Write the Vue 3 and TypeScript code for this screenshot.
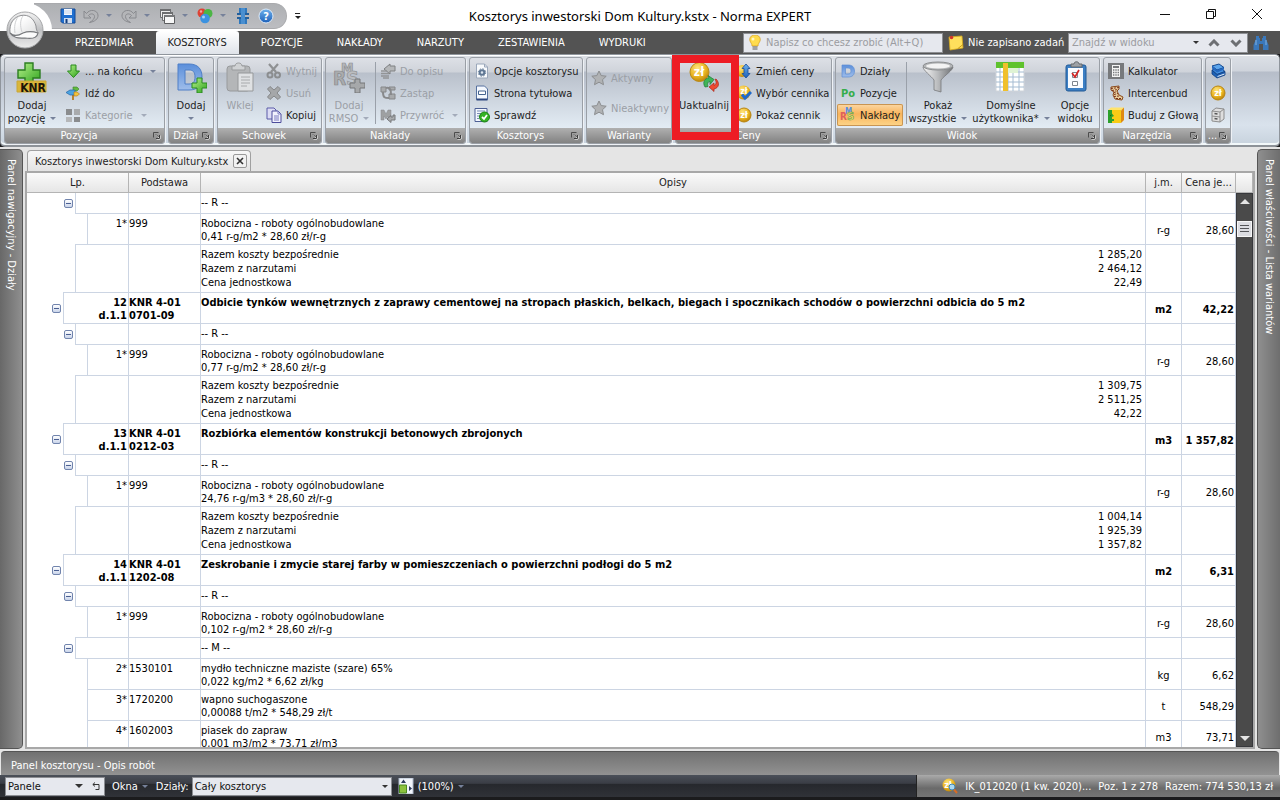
<script setup lang="ts">
import { ref } from 'vue'

interface Command {
  icon: string
  label: string
  off?: boolean
  drop?: boolean
  on?: boolean
}
interface Column {
  kind: 'big' | 'stack' | 'sep'
  width?: number
  inset?: number
  lines?: string[]
  icon?: string
  off?: boolean
  drop?: boolean
  items?: Command[]
}
interface Group {
  name: string
  width: number
  plain?: boolean
  marked?: boolean
  columns: Column[]
}

const tabs = ['PRZEDMIAR', 'KOSZTORYS', 'POZYCJE', 'NAKŁADY', 'NARZUTY', 'ZESTAWIENIA', 'WYDRUKI']
const activeTab = ref('KOSZTORYS')

const groups: Group[] = [
  {
    name: 'Pozycja', width: 161, columns: [
      { kind: 'big', width: 54, icon: 'knr', lines: ['Dodaj', 'pozycję'], drop: true },
      { kind: 'stack', inset: 6, items: [
        { icon: 'down', label: '... na końcu', drop: true },
        { icon: 'goto', label: 'Idź do' },
        { icon: 'tiles', label: 'Kategorie', off: true, drop: true },
      ] },
    ],
  },
  { name: 'Dział', width: 46, columns: [{ kind: 'big', width: 44, icon: 'dplus', lines: ['Dodaj', ''], drop: true }] },
  {
    name: 'Schowek', width: 105, columns: [
      { kind: 'big', width: 44, icon: 'paste', lines: ['Wklej'], off: true },
      { kind: 'stack', inset: 4, items: [
        { icon: 'cut', label: 'Wytnij', off: true },
        { icon: 'cross', label: 'Usuń', off: true },
        { icon: 'copy', label: 'Kopiuj' },
      ] },
    ],
  },
  {
    name: 'Nakłady', width: 141, columns: [
      { kind: 'big', width: 46, icon: 'rms', lines: ['Dodaj', 'RMSO'], off: true, drop: true },
      { kind: 'sep' },
      { kind: 'stack', inset: 4, items: [
        { icon: 'todesc', label: 'Do opisu', off: true },
        { icon: 'swap', label: 'Zastąp', off: true },
        { icon: 'restore', label: 'Przywróć', off: true, drop: true },
      ] },
    ],
  },
  {
    name: 'Kosztorys', width: 114, columns: [
      { kind: 'stack', inset: 4, items: [
        { icon: 'docgear', label: 'Opcje kosztorysu' },
        { icon: 'titlepage', label: 'Strona tytułowa' },
        { icon: 'check', label: 'Sprawdź' },
      ] },
    ],
  },
  {
    name: 'Warianty', width: 86, plain: true, columns: [
      { kind: 'stack', inset: 4, items: [
        { icon: 'star', label: 'Aktywny', off: true },
        { icon: 'star', label: 'Nieaktywny', off: true },
      ] },
    ],
  },
  {
    name: 'Ceny', width: 157, marked: true, columns: [
      { kind: 'big', width: 56, icon: 'update', lines: ['Uaktualnij'] },
      { kind: 'stack', inset: 4, items: [
        { icon: 'coinup', label: 'Zmień ceny' },
        { icon: 'coincheck', label: 'Wybór cennika' },
        { icon: 'coin', label: 'Pokaż cennik' },
      ] },
    ],
  },
  {
    name: 'Widok', width: 265, columns: [
      { kind: 'stack', inset: 4, width: 67, items: [
        { icon: 'dletter', label: 'Działy' },
        { icon: 'po', label: 'Pozycje' },
        { icon: 'rmssmall', label: 'Nakłady', on: true },
      ] },
      { kind: 'sep' },
      { kind: 'big', width: 62, icon: 'funnel', lines: ['Pokaż', 'wszystkie'], drop: true },
      { kind: 'big', width: 84, icon: 'sheet', lines: ['Domyślne', 'użytkownika*'], drop: true },
      { kind: 'big', width: 44, icon: 'clip', lines: ['Opcje', 'widoku'] },
    ],
  },
  {
    name: 'Narzędzia', width: 99, columns: [
      { kind: 'stack', inset: 4, items: [
        { icon: 'calc', label: 'Kalkulator' },
        { icon: 'inter', label: 'Intercenbud' },
        { icon: 'head', label: 'Buduj z Głową' },
      ] },
    ],
  },
  {
    name: '...', width: 26, columns: [
      { kind: 'stack', inset: 4, items: [
        { icon: 'books', label: '' },
        { icon: 'coin', label: '' },
        { icon: 'cabinet', label: '' },
      ] },
    ],
  },
]

type Kind = 'head' | 'line' | 'sum' | 'item'
interface Row {
  kind: Kind
  lp?: string[]
  code?: string[]
  text: string[]
  values?: string[]
  unit?: string
  price?: string
}

const sumLabels = ['Razem koszty bezpośrednie', 'Razem z narzutami', 'Cena jednostkowa']
const labour = (formula: string): Row => ({
  kind: 'line', lp: ['1*'], code: ['999'], text: ['Robocizna - roboty ogólnobudowlane', formula], unit: 'r-g', price: '28,60',
})

const rows: Row[] = [
  { kind: 'head', text: ['-- R --'] },
  labour('0,41 r-g/m2 * 28,60 zł/r-g'),
  { kind: 'sum', text: sumLabels, values: ['1 285,20', '2 464,12', '22,49'] },
  { kind: 'item', lp: ['12', 'd.1.1'], code: ['KNR 4-01', '0701-09'], text: ['Odbicie tynków wewnętrznych z zaprawy cementowej na stropach płaskich, belkach, biegach i spocznikach schodów o powierzchni odbicia do 5 m2'], unit: 'm2', price: '42,22' },
  { kind: 'head', text: ['-- R --'] },
  labour('0,77 r-g/m2 * 28,60 zł/r-g'),
  { kind: 'sum', text: sumLabels, values: ['1 309,75', '2 511,25', '42,22'] },
  { kind: 'item', lp: ['13', 'd.1.1'], code: ['KNR 4-01', '0212-03'], text: ['Rozbiórka elementów konstrukcji betonowych zbrojonych'], unit: 'm3', price: '1 357,82' },
  { kind: 'head', text: ['-- R --'] },
  labour('24,76 r-g/m3 * 28,60 zł/r-g'),
  { kind: 'sum', text: sumLabels, values: ['1 004,14', '1 925,39', '1 357,82'] },
  { kind: 'item', lp: ['14', 'd.1.1'], code: ['KNR 4-01', '1202-08'], text: ['Zeskrobanie i zmycie starej farby w pomieszczeniach o powierzchni podłogi do 5 m2'], unit: 'm2', price: '6,31' },
  { kind: 'head', text: ['-- R --'] },
  labour('0,102 r-g/m2 * 28,60 zł/r-g'),
  { kind: 'head', text: ['-- M --'] },
  { kind: 'line', lp: ['2*'], code: ['1530101'], text: ['mydło techniczne maziste (szare) 65%', '0,022 kg/m2 * 6,62 zł/kg'], unit: 'kg', price: '6,62' },
  { kind: 'line', lp: ['3*'], code: ['1720200'], text: ['wapno suchogaszone', '0,00088 t/m2 * 548,29 zł/t'], unit: 't', price: '548,29' },
  { kind: 'line', lp: ['4*'], code: ['1602003'], text: ['piasek do zapraw', '0,001 m3/m2 * 73,71 zł/m3'], unit: 'm3', price: '73,71' },
]

const depth: Record<Kind, number> = { item: 0, head: 1, sum: 1, line: 2 }
const closesLevel = (i: number): boolean => i + 1 < rows.length && depth[rows[i + 1].kind] < depth[rows[i].kind]
const indentOf = (i: number): number => 36 + 12 * (depth[rows[i].kind] - (closesLevel(i) ? 1 : 0))
const px = (n?: number) => (n === undefined ? undefined : n + 'px')
</script>

<template>
  <div class="app">
    <svg class="defs" aria-hidden="true">
      <defs>
        <linearGradient id="gGreen" x1="0" y1="0" x2="1" y2="1"><stop offset="0" stop-color="#b6f08a" /><stop offset="1" stop-color="#2ea31d" /></linearGradient>
        <linearGradient id="gBlue" x1="0" y1="0" x2="0" y2="1"><stop offset="0" stop-color="#6fb2ee" /><stop offset="1" stop-color="#1c5fb8" /></linearGradient>
        <linearGradient id="gD" x1="0" y1="0" x2="0" y2="1"><stop offset="0" stop-color="#5b8fdb" /><stop offset="1" stop-color="#9fbdea" /></linearGradient>
        <linearGradient id="gSteel" x1="0" y1="0" x2="1" y2="0"><stop offset="0" stop-color="#f5f5f5" /><stop offset=".5" stop-color="#b9bbbd" /><stop offset="1" stop-color="#6f7174" /></linearGradient>
        <radialGradient id="gCoin" cx=".4" cy=".3" r=".75"><stop offset="0" stop-color="#ffe680" /><stop offset=".6" stop-color="#e9b320" /><stop offset="1" stop-color="#b67d08" /></radialGradient>
        <linearGradient id="gOrb" x1="0" y1="0" x2="0" y2="1"><stop offset="0" stop-color="#f4f4f4" /><stop offset=".5" stop-color="#bfc0c2" /><stop offset="1" stop-color="#ececec" /></linearGradient>
        <linearGradient id="gHat" x1="0" y1="0" x2="1" y2="1"><stop offset=".3" stop-color="#fff" /><stop offset="1" stop-color="#d9dadb" /></linearGradient>
      </defs>
    </svg>
    <svg class="symbols" aria-hidden="true">
      <symbol id="i-knr" viewBox="0 0 32 32">
        <path d="M9 2h8v7h7v8h-7v6H9v-6H2V9h7z" fill="url(#gGreen)" stroke="#2b7d20" stroke-width="1.4" />
        <path d="M1 20h29v11H1z" fill="#d9b63a" stroke="#c9a637" />
        <text x="17" y="31" text-anchor="middle" font-size="12" font-weight="bold" fill="#1c1408">KNR</text>
      </symbol>
      <symbol id="i-down" viewBox="0 0 16 16"><path d="M6 2h5v6h3.500L8.500 14.500 2.500 8H6z" fill="url(#gGreen)" stroke="#278a1c" stroke-width="1" /></symbol>
      <symbol id="i-goto" viewBox="0 0 16 16">
        <path d="M7 5h2v10H7z" fill="#b98330" />
        <path d="M8 2h4l2 2-2 2H8z" fill="#63ba3f" stroke="#3a852a" stroke-width=".6" /><path d="M10 5H5L1 7.500 5 10h5z" fill="#4aa3e0" stroke="#2665a8" stroke-width=".7" /><path d="M9 7h3l2.500 2L12 11H9z" fill="#f3c23c" stroke="#b07a1c" stroke-width=".6" />
      </symbol>
      <symbol id="i-tiles" viewBox="0 0 16 16"><path d="M1 2h6v6H1z" fill="#8a8c8e" /><path d="M9 2h6v6H9z" fill="#a9abad" /><path d="M1 10h6v5H1z" fill="#b5b7b9" /><path d="M9 10h6v5H9z" fill="#8a8c8e" /></symbol>
      <symbol id="i-dplus" viewBox="0 0 32 32">
        <path fill-rule="evenodd" d="M3 3h11c9 0 13 5 13 13S23 29 14 29H3zM10 9v14h4c4 0 6-2 6-7s-2-7-6-7z" fill="url(#gD)" stroke="#4f7fc7" />
        <path d="M22 17h5v5h5v5h-5v5h-5v-5h-5v-5h5z" fill="url(#gGreen)" stroke="#2b8a20" />
      </symbol>
      <symbol id="i-paste" viewBox="0 0 32 32">
        <rect x="3" y="5" width="23" height="25" rx="3" fill="#b4b6b8" stroke="#989a9c" /><path d="M8 9V5h3c0-4 7-4 7 0h3v4z" fill="#d0d2d4" stroke="#999b9d" />
        <path d="M14 12h15v18H14z" fill="#dfe1e3" stroke="#96989a" /><path d="M17 16h9M17 19h9M17 22h9M17 25h6" stroke="#a8aaac" />
      </symbol>
      <symbol id="i-cut" viewBox="0 0 16 16"><path d="M3 1l7 8M12 1L5 9" stroke="#8f9193" stroke-width="2.200" /><circle cx="4" cy="12" r="2.500" fill="none" stroke="#8b8d8f" stroke-width="2" /><circle cx="11.500" cy="12" r="2.500" fill="none" stroke="#8b8d8f" stroke-width="2" /></symbol>
      <symbol id="i-cross" viewBox="0 0 16 16"><path d="M4 1.500L8 5l4-3.500L14.500 4 11 8l3.500 4L12 14.500 8 11l-4 3.500L1.500 12 5 8 1.500 4z" fill="#a5a7a9" stroke="#858789" /></symbol>
      <symbol id="i-copy" viewBox="0 0 16 16"><path d="M1 1h7l2 2v9H1z" fill="#dcdcf4" stroke="#5b5ba8" /><path d="M6 4h6l3 3v8.500H6z" fill="#f1f1fc" stroke="#4d4d9c" /><path d="M12 4v3h3M8 9h5M8 11h5M8 13h5" fill="none" stroke="#7b7bc0" /></symbol>
      <symbol id="i-rms" viewBox="0 0 32 32">
        <text x="8" y="12" font-size="14" font-weight="bold" fill="#b5b7ba" stroke="#8f9194" stroke-width=".7">M</text><text x="0" y="24" font-size="19" font-weight="bold" fill="#aaacae" stroke="#88898b" stroke-width=".7">R</text><text x="13" y="24" font-size="20" font-weight="bold" fill="#bbbdc0" stroke="#929496" stroke-width=".7">S</text>
        <path d="M22 18h5v4h5v5h-5v5h-5v-5h-5v-5h5z" fill="#a6a8aa" stroke="#747678" />
      </symbol>
      <symbol id="i-todesc" viewBox="0 0 16 16"><path d="M15 3v5h-5v3L4 6l6-5v2z" fill="#b5b7b9" stroke="#7e8082" /><path d="M1 8h6M1 10.500h8M1 13h8M3 15h6" stroke="#929496" stroke-width="1.500" /></symbol>
      <symbol id="i-swap" viewBox="0 0 16 16"><path d="M1 2h5v5H1zM9 2h6v3H9zM9 9h6v5H9z" fill="#a8aaac" stroke="#858789" /><path d="M3 7c0 6 2 6 6 6M6 3c5-1 5 3 5 7" fill="none" stroke="#88898b" stroke-width="2" /></symbol>
      <symbol id="i-restore" viewBox="0 0 16 16"><path d="M1 13V3h3l2 4 2-4h3v10H8V9l-2 3-2-3v4z" fill="#9ea0a2" stroke="#858789" stroke-width=".5" /><path d="M15 8v5h-4v2.500L7 12l4-3.500V10h2V8z" fill="#a9abad" stroke="#77797b" /></symbol>
      <symbol id="i-docgear" viewBox="0 0 16 16"><path d="M2.500 1h8l3 3v11h-11z" fill="#f8fafc" stroke="#9aa7ba" /><path d="M10.500 1v3h3" fill="none" stroke="#9aa7ba" /><circle cx="8" cy="9.500" r="2.300" fill="#dfe7f0" stroke="#5f7794" stroke-width="2" /><circle cx="8" cy="9.500" r="3.700" fill="none" stroke="#5f7794" stroke-dasharray="1.500 1.400" /></symbol>
      <symbol id="i-titlepage" viewBox="0 0 16 16"><path d="M2.500 1h8l3 3v10.500h-11z" fill="#f4f8fe" stroke="#56719f" /><path d="M2.500 14.500h11" stroke="#2d477f" stroke-width="2" /><path d="M4.500 6h7v3.500h-7z" fill="#fff" stroke="#46648f" /></symbol>
      <symbol id="i-check" viewBox="0 0 16 16"><path d="M1 1.500h12v13H1z" fill="#f4f8fe" stroke="#4c5f94" /><path d="M3 4h8M3 6.500h6M3 9h3M3 11.500h2" stroke="#778bb3" /><circle cx="10.500" cy="10" r="5" fill="#35b225" stroke="#1c8613" /><path d="M8 10l2 2 3-4" fill="none" stroke="#fff" stroke-width="1.800" /></symbol>
      <symbol id="i-star" viewBox="0 0 16 16"><path d="M8 1l2.200 4.600 5 .6-3.700 3.500 1 5L8 12.200 3.500 14.700l1-5L.8 6.200l5-.6z" fill="#b0b2b4" stroke="#8c8e90" /></symbol>
      <symbol id="i-coin" viewBox="0 0 16 16"><circle cx="8" cy="8" r="7" fill="url(#gCoin)" stroke="#b88512" /><text x="8" y="11" text-anchor="middle" font-size="9" font-weight="bold" fill="#fff">zł</text></symbol>
      <symbol id="i-coinup" viewBox="0 0 16 16"><circle cx="6" cy="8" r="6" fill="url(#gCoin)" /><path d="M10 1l4 4.500h-2v5h2L10 15l-4-4.500h2v-5H6z" fill="url(#gBlue)" stroke="#164d9c" stroke-width=".8" /></symbol>
      <symbol id="i-coincheck" viewBox="0 0 16 16"><circle cx="7.500" cy="7.500" r="7" fill="url(#gCoin)" /><text x="8" y="9" text-anchor="middle" font-size="8" font-weight="bold" fill="#fff">zł</text><path d="M6 9.500l3 3.500 6-6" fill="none" stroke="#1e69cc" stroke-width="3" /></symbol>
      <symbol id="i-update" viewBox="0 0 32 32">
        <circle cx="11.500" cy="11" r="9.500" fill="url(#gCoin)" stroke="#b98a18" /><text x="11" y="15" text-anchor="middle" font-size="12" font-weight="bold" fill="#fff">zł</text>
        <path d="M17 26c-3-5 0-9 4-9l-1-2.500 6 4-4 5v-3c-2 0-3 2-2 5z" fill="#3fb457" stroke="#1c7a35" stroke-width=".7" /><path d="M28 18c4 4 3 9-2 10v2.500l-5-4.500 5-4v2.500c2-1 3-3 1-6z" fill="#ee4a31" stroke="#a92316" stroke-width=".7" />
      </symbol>
      <symbol id="i-dletter" viewBox="0 0 16 16"><path fill-rule="evenodd" d="M2 2h6c4.500 0 6.500 2.200 6.500 6S12.500 14 8 14H2zM5.500 5v6H8c2 0 3-1 3-3s-1-3-3-3z" fill="url(#gD)" stroke="#5f8ed2" stroke-width=".7" /></symbol>
      <symbol id="i-po" viewBox="0 0 16 16"><text x="8" y="12" text-anchor="middle" font-size="11" font-weight="bold" fill="#35ad4a">Po</text></symbol>
      <symbol id="i-rmssmall" viewBox="0 0 16 16"><text x="5" y="7" font-size="8" font-weight="bold" fill="#5b8fe0">M</text><text x="0" y="13" font-size="10" font-weight="bold" fill="#e0605a">R</text><text x="7" y="13" font-size="11" font-weight="bold" fill="#f6dc6a" stroke="#5ba04a" stroke-width=".6">S</text></symbol>
      <symbol id="i-funnel" viewBox="0 0 32 32"><path d="M1 6c0 3 8 9 11 13v10l7 2V19c3-4 12-10 12-13z" fill="url(#gSteel)" stroke="#77797b" stroke-width=".8" /><ellipse cx="16" cy="5" rx="15" ry="4" fill="#b3b5b7" stroke="#8a8c8e" /><ellipse cx="16" cy="5" rx="12" ry="2.600" fill="#f3f3f3" /></symbol>
      <symbol id="i-sheet" viewBox="0 0 32 32">
        <path d="M1 1h28v29H1z" fill="#fff" stroke="#cfd4da" /><path d="M1 1h28v6H1z" fill="#5fc22d" />
        <path d="M1 11h28M1 16h28M1 21h28M1 26h28M5 7v23M13 7v23M18 7v23M24 7v23" stroke="#a5bcd2" /><path d="M13 7h10v5H13z" fill="#dff3d4" /><path d="M8 2h5v28H8z" fill="#f0c02c" />
      </symbol>
      <symbol id="i-clip" viewBox="0 0 32 32"><rect x="7" y="4" width="20" height="26" rx="2" fill="#3c7fc4" stroke="#235a96" /><path d="M9 7h15v20H9z" fill="#f8fbff" /><path d="M12 6V3h3c0-3 5-3 5 0h3v3z" fill="#9da1a6" stroke="#64686d" /><path d="M13.500 11.500h5v5h-5zM13.500 20.500h5v4h-5z" fill="#fff" stroke="#7d858f" /><path d="M13 12l3 4 4-7" fill="none" stroke="#d52626" stroke-width="1.700" /></symbol>
      <symbol id="i-calc" viewBox="0 0 16 16"><path d="M0 0h16v16H0z" fill="#77797c" /><path d="M4 2h8v12H4z" fill="#f4f4f4" /><path d="M5 3h6v2H5z" fill="#77797c" /><path d="M5 7h6M5 9.500h6M5 12h6" stroke="#77797c" stroke-width="1.500" stroke-dasharray="1.400 .9" /></symbol>
      <symbol id="i-inter" viewBox="0 0 16 16"><path d="M3 2l8-1v3L9 6l2 4 4 2-1 3-7-1-2-4 1-3-3-2z" fill="#e8cf9c" stroke="#8a4a1c" /><path d="M3 3.500l8-1M4 5.500l6-1M6 7.500l3-1M6 9.500l4-1M6 11.500l5-.5M8 13.500l6 0" stroke="#7b2f1b" stroke-width="1" stroke-dasharray="2 1" /></symbol>
      <symbol id="i-head" viewBox="0 0 16 16"><path d="M0 3l3-2.500h13l-3 3z" fill="#ffe36a" /><path d="M0 3h13v13H0z" fill="#f8cb16" /><path d="M13 3.500l3-3V13l-3 3z" fill="#df8a12" /><path d="M0 3h4v3.500L6 9l-2 1v2h2v2H4v2H0z" fill="#2ca02c" /><path d="M2 9l1.500-1" stroke="#175b17" /></symbol>
      <symbol id="i-books" viewBox="0 0 16 16"><path d="M2 7l8-2.500 5 4L7 11.500z" fill="#4791de" stroke="#164a91" /><path d="M2 7v4l5 4 8-3V8.500L7 11.500z" fill="#1d61b6" stroke="#123f80" stroke-width=".8" /><path d="M2 3l7-2 5 3.500-7 2.500z" fill="#5ca5ec" stroke="#164a91" /><path d="M7 7l7-2.500v2L7 9.500 2 5.500V3z" fill="#2468c0" /><path d="M7.500 13.500l7-2.500" stroke="#e8eef6" /></symbol>
      <symbol id="i-cabinet" viewBox="0 0 16 16"><path d="M2 4l4-3 8 1v10l-4 3-8-1z" fill="#dedede" stroke="#8d8d8d" /><path d="M2 4l8 1v10M10 5l4-3M2 9l8 1" fill="none" stroke="#8d8d8d" /><path d="M4.500 6.500l3 .4M4.500 11.500l3 .4" stroke="#555" stroke-width="1.500" /></symbol>
      <symbol id="i-save" viewBox="0 0 16 16"><path d="M1 1h14v14H2.500L1 13.500z" fill="#1f6fd0" stroke="#154a96" /><path d="M4 1h8v6H4z" fill="#f4f8ff" /><path d="M4 3h8M4 5h8" stroke="#b8c8de" stroke-width=".8" /><path d="M4 10h8v5H4z" fill="#cfdcee" /><path d="M5.500 11h2v4h-2z" fill="#123d7c" /></symbol>
      <symbol id="i-undo" viewBox="0 0 16 16"><path d="M1 3v7h7L5.500 7.500c2-2.500 6-2 6 1 0 2-1.500 4-5 6 5-.8 9-3.500 8.500-7.500C14.500 2 7 .5 3.500 5.500z" fill="#b4b5b8" stroke="#85868a" stroke-width=".9" /></symbol>
      <symbol id="i-windows" viewBox="0 0 16 16"><path d="M1.500 1.500h10v8h-10z" fill="#eee" stroke="#6d6e70" /><path d="M1 1h11v2H1z" fill="#6d6e70" /><path d="M3.500 4.500h10v8h-10z" fill="#eee" stroke="#6d6e70" /><path d="M3 4h11v2H3z" fill="#6d6e70" /><path d="M5.500 7.500h10v8h-10z" fill="#f7f7f7" stroke="#5b5c5e" /><path d="M5 7h11v2H5z" fill="#77787a" /></symbol>
      <symbol id="i-balls" viewBox="0 0 16 16"><circle cx="5" cy="5" r="4.500" fill="#dd4234" /><circle cx="11" cy="5.500" r="4.500" fill="#4bb545" /><circle cx="8" cy="10.500" r="4.800" fill="#3b92e0" /><circle cx="6.500" cy="9" r="1.500" fill="#a6d3f7" /><circle cx="4" cy="3.500" r="1.200" fill="#f3a69c" /></symbol>
      <symbol id="i-fit" viewBox="0 0 16 16"><path d="M4 0h3v5H4zM9 0h3v5H9zM4 11h3v5H4zM9 11h3v5H9z" fill="#2f78bd" /><path d="M2 6h12M2 10h12" stroke="#235f9c" stroke-width="2" /><path d="M6 0h4v16H6z" fill="#4a8fd0" /></symbol>
      <symbol id="i-help" viewBox="0 0 16 16"><circle cx="8" cy="8" r="7" fill="url(#gBlue)" stroke="#dfeaf6" /><text x="8" y="12" text-anchor="middle" font-size="11" font-weight="bold" fill="#fff">?</text></symbol>
      <symbol id="i-bulb" viewBox="0 0 16 16"><path d="M8 0c4 0 6 3 5 6-.7 2-2 2.500-2 5H5c0-2.500-1.300-3-2-5C2 3 4 0 8 0z" fill="#ffdc4d" stroke="#d59b18" stroke-width=".7" /><circle cx="6" cy="4" r="1.500" fill="#fff7c8" /><path d="M5.500 12h5M5.500 14h5" stroke="#8a8a8a" stroke-width="1.700" /></symbol>
      <symbol id="i-note" viewBox="0 0 16 16"><path d="M1 2l13-1 1 12-13 2z" fill="#ffe05c" stroke="#d6a91d" stroke-width=".8" /><path d="M10 13.500l5-4" stroke="#c99c18" /><circle cx="3.500" cy="2.500" r="1.800" fill="#d2352a" /></symbol>
      <symbol id="i-binoc" viewBox="0 0 16 16"><path d="M3 1h3v2h1v3h2V3h1V1h3v3l2.500 6v5H10V9H6v6H.5v-5L3 4z" fill="#3a78bb" /><path d="M3 5v5M13 5v5" stroke="#82b1e0" /></symbol>
      <symbol id="i-launch" viewBox="0 0 8 8"><path d="M.5 5.500v-5h5" fill="none" stroke="#4d4d4d" /><path d="M3 3l3.500 3.500M7 3.500V7H3.500" fill="none" stroke="#fff" /><path d="M3 2.500l3 3M6.500 3v3.500H3" fill="none" stroke="#3d3d3d" /></symbol>
      <symbol id="i-orb" viewBox="0 0 38 38"><circle cx="19" cy="19" r="18" fill="url(#gOrb)" stroke="#a5a6a8" /><path d="M4 22C3 12 8 6 15 4.500 23 3 28 8 30 15c0 3 1 5 2 7-5 1-9-1-14 0-5 3-9 5-14 0z" fill="url(#gHat)" stroke="#909194" /><path d="M12 6c-3 4-4 10-3 16M17 5c-3 4-3 10-1 16" fill="none" stroke="#d0d1d3" /><path d="M4 22c4 4 8 3 13 0 5-2 12-1 15 0-1 5-7 6-13 5-5 0-11 1-15-5z" fill="#fbfbfb" stroke="#77797c" stroke-width="1.200" /></symbol>
      <symbol id="i-coinfind" viewBox="0 0 16 16"><circle cx="7" cy="7" r="6.500" fill="url(#gCoin)" /><text x="6" y="10" text-anchor="middle" font-size="9" font-weight="bold" fill="#fff">zł</text><circle cx="10" cy="9" r="3" fill="#a9d8f2" stroke="#3e85b5" /><path d="M12 11.500l3 3.500" stroke="#d86c24" stroke-width="2" /></symbol>
      <symbol id="i-zoom" viewBox="0 0 16 16"><path d="M1 0h14v16H1z" fill="#f1f5fb" stroke="#aeb9cb" /><path d="M1.500 7h7v8h-7z" fill="#8bc13e" stroke="#4b8a1e" /><path d="M3 5h5L5.500 1.500zM11 8v5l3-2.500z" fill="#2b3a5c" /></symbol>
    </svg>

    <header class="titlebar">
      <button class="orb" aria-label="Menu programu"><svg><use href="#i-orb" /></svg></button>
      <div class="lead">
        <div class="quick">
          <button class="q" aria-label="Zapisz"><svg><use href="#i-save" /></svg></button>
          <button class="q wide" aria-label="Cofnij"><svg><use href="#i-undo" /></svg><i class="drop"></i></button>
          <button class="q wide" aria-label="Ponów"><svg class="flip"><use href="#i-undo" /></svg><i class="drop"></i></button>
          <button class="q wide" aria-label="Okna"><svg><use href="#i-windows" /></svg><i class="drop"></i></button>
          <button class="q wide" aria-label="Kolory"><svg><use href="#i-balls" /></svg><i class="drop"></i></button>
          <button class="q" aria-label="Dopasuj"><svg><use href="#i-fit" /></svg></button>
          <button class="q" aria-label="Pomoc"><svg><use href="#i-help" /></svg></button>
        </div>
        <button class="more" aria-label="Dostosuj pasek"></button>
      </div>
      <h1>Kosztorys inwestorski Dom Kultury.kstx - Norma EXPERT</h1>
      <div class="winbtns">
        <button aria-label="Minimalizuj"><svg viewBox="0 0 12 12"><path d="M1 6.500h10" /></svg></button>
        <button aria-label="Przywróć"><svg viewBox="0 0 12 12"><path d="M1.500 3.500h7v7h-7zM3.500 3V1.500h7v7H9" /></svg></button>
        <button aria-label="Zamknij"><svg viewBox="0 0 12 12"><path d="M1 1l10 10M11 1L1 11" /></svg></button>
      </div>
    </header>

    <nav class="tabrow">
      <button v-for="t in tabs" :key="t" class="tab" :class="{ active: t === activeTab }" @click="activeTab = t">{{ t }}</button>
      <div class="tools">
        <label class="tell"><svg><use href="#i-bulb" /></svg><input type="text" placeholder="Napisz co chcesz zrobić (Alt+Q)" aria-label="Napisz co chcesz zrobić" /></label>
        <button class="tasks"><svg><use href="#i-note" /></svg>Nie zapisano zadań</button>
        <div class="find">
          <input type="text" placeholder="Znajdź w widoku" aria-label="Znajdź w widoku" />
          <button aria-label="Historia"><i class="drop dark"></i></button>
          <button aria-label="Poprzedni"><svg viewBox="0 0 12 8"><path d="M1.500 6.500L6 2l4.500 4.500" /></svg></button>
          <button aria-label="Następny"><svg viewBox="0 0 12 8"><path d="M1.500 1.500L6 6l4.500-4.500" /></svg></button>
        </div>
        <button class="binoc" aria-label="Szukaj"><svg><use href="#i-binoc" /></svg></button>
      </div>
    </nav>

    <section class="ribbon">
      <div v-for="g in groups" :key="g.name" class="group" :style="{ width: px(g.width) }">
        <div class="gbody">
          <template v-for="(c, ci) in g.columns" :key="ci">
            <button v-if="c.kind === 'big'" class="big" :class="{ off: c.off }" :style="{ width: px(c.width) }">
              <svg><use :href="'#i-' + c.icon" /></svg>
              <span v-for="(l, li) in c.lines" :key="li">{{ l }}<i v-if="c.drop && li === 1" class="drop"></i></span>
            </button>
            <span v-else-if="c.kind === 'sep'" class="sep"></span>
            <div v-else class="stack" :style="{ width: px(c.width), paddingLeft: px((c.inset ?? 4) - 3) }">
              <button v-for="b in c.items" :key="b.icon + b.label" class="small" :class="{ off: b.off, on: b.on }" :aria-label="b.label || b.icon">
                <svg><use :href="'#i-' + b.icon" /></svg><span v-if="b.label">{{ b.label }}</span><i v-if="b.drop" class="drop"></i>
              </button>
            </div>
          </template>
        </div>
        <div class="gfoot"><span>{{ g.name }}</span><svg v-if="!g.plain"><use href="#i-launch" /></svg></div>
        <div v-if="g.marked" class="marker"></div>
      </div>
    </section>

    <main class="work">
      <aside class="side left"><span>Panel nawigacyjny - Działy</span></aside>
      <div class="doc">
        <div class="doctabs">
          <div class="doctab"><span>Kosztorys inwestorski Dom Kultury.kstx</span><button aria-label="Zamknij kartę"><svg viewBox="0 0 8 8"><path d="M1 1l6 6M7 1L1 7" /></svg></button></div>
        </div>
        <div class="sheet">
          <table>
            <thead>
              <tr><th>Lp.</th><th>Podstawa</th><th>Opisy</th><th>j.m.</th><th>Cena je...</th><th aria-label="Przewijanie"></th></tr>
            </thead>
            <tbody>
              <tr v-for="(r, i) in rows" :key="i" :class="r.kind">
                <td class="lp">
                  <span class="indent" :style="{ width: px(indentOf(i)) }"><button v-if="r.kind === 'item' || r.kind === 'head'" aria-label="Zwiń"></button></span>
                  <span v-if="closesLevel(i)" class="filler"></span>
                  <span class="num"><span v-for="l in r.lp" :key="l">{{ l }}</span></span>
                </td>
                <td class="code"><span v-for="l in r.code" :key="l">{{ l }}</span></td>
                <td class="desc">
                  <div v-for="(l, li) in r.text" :key="li"><span>{{ l }}</span><span v-if="r.values">{{ r.values[li] }}</span></div>
                </td>
                <td class="unit">{{ r.unit }}</td>
                <td class="price">{{ r.price }}</td>
              </tr>
            </tbody>
          </table>
          <div class="scroll"><i class="up"></i><div class="thumb"></div><i class="down"></i></div>
        </div>
      </div>
      <aside class="side right"><span>Panel właściwości - Lista wariantów</span></aside>
    </main>

    <div class="dock"><section class="bottom">Panel kosztorysu - Opis robót</section></div>

    <footer class="status">
      <div class="panels">
        <select aria-label="Panele"><option>Panele</option></select><i class="drop dark"></i>
        <button aria-label="Cofnij układ"><svg viewBox="0 0 8 8"><path d="M3 .5L.8 2.500 3 4.500M1 2.500h6v5H3.500" /></svg></button>
      </div>
      <button class="link">Okna<i class="drop"></i></button>
      <label for="dz">Działy:</label>
      <div class="scope"><select id="dz"><option>Cały kosztorys</option></select><i class="drop dark"></i></div>
      <button class="zoom" aria-label="Powiększenie"><svg><use href="#i-zoom" /></svg>(100%)<i class="drop"></i></button>
      <div class="info"><svg><use href="#i-coinfind" /></svg><span>IK_012020 (1 kw. 2020)...</span><span>Poz. 1 z 278</span><span>Razem: 774 530,13 zł</span></div>
    </footer>
  </div>
</template>

<style>
body { margin: 0; background: #1b1b1d; }
</style>

<style scoped>
.app { height: 100vh; display: flex; flex-direction: column; overflow: hidden; box-sizing: border-box; padding-bottom: 3px; background: #1b1b1d; font: 11px/13px "DejaVu Sans Condensed", "DejaVu Sans", sans-serif; color: #1e1e1e; }
.app * { box-sizing: border-box; }
button, input, select { font: inherit; color: inherit; border: 0; padding: 0; margin: 0; background: none; outline: 0; appearance: none; white-space: nowrap; }
svg { width: 16px; height: 16px; flex: none; display: block; }
.defs { position: absolute; width: 0; height: 0; }
.symbols { display: none; }
.drop { width: 0; height: 0; flex: none; display: inline-block; border: 3px solid transparent; border-top-color: #76819a; border-bottom: 0; }
.drop.dark { border-top-color: #333; }

.titlebar { flex: none; height: 31px; background: #fff; display: grid; grid-template-columns: minmax(0, 1fr) auto minmax(0, 1fr); align-items: center; position: relative; }
.orb { position: absolute; left: 6px; top: 11px; z-index: 3; }
.orb svg { width: 38px; height: 38px; }
.titlebar::before { content: ""; position: absolute; left: -2px; top: 3px; width: 54px; height: 28px; border-radius: 27px 27px 0 0; background: #fff; z-index: 1; }
.lead { display: flex; align-items: center; }
.quick { margin-left: 34px; width: 253px; height: 26px; padding-left: 26px; border-radius: 0 13px 13px 0; background: linear-gradient(#aeb0b3, #bcbdc1); border: 1px solid #a9aaad; border-left: 0; display: flex; align-items: center; gap: 7px; }
.q { display: flex; align-items: center; gap: 7px; }
.q svg { width: 16px; height: 16px; }
.q.wide { width: 31px; }
.flip { transform: scaleX(-1); }
.more { width: 5px; height: 6px; margin-left: 8px; border-top: 1px solid #222; display: flex; align-items: flex-end; }
.more::after { content: ""; border: 3px solid transparent; border-top-color: #222; border-bottom: 0; }
h1 { margin: 0; text-align: center; font: 13px/18px "Noto Sans", sans-serif; color: #000; }
.winbtns { display: flex; width: 138px; margin-left: auto; align-self: start; }
.winbtns button { width: 46px; height: 28px; display: grid; place-items: center; }
.winbtns svg { width: 12px; height: 12px; fill: none; stroke: #111; }

.tabrow { flex: none; height: 23px; background: #535353; display: flex; padding-left: 63px; gap: 10px; }
.tab { padding: 0 12px; color: #fff; height: 23px; }
.tab.active { background: linear-gradient(#fff, #dfe3e9); color: #222; border-radius: 3px 3px 0 0; }
.tools { margin-left: auto; display: flex; align-items: center; gap: 5px; padding-right: 11px; }
.tell { width: 200px; height: 20px; background: #e6e8ee; border: 1px solid #8d8f93; display: flex; align-items: center; gap: 3px; padding-left: 3px; }
.tell input { flex: 1; min-width: 0; }
input::placeholder { color: #9b9ca1; opacity: 1; }
.tasks { display: flex; align-items: center; gap: 4px; color: #fff; width: 115px; }
.find { width: 180px; height: 20px; background: #e6e8ee; border: 1px solid #8d8f93; display: flex; align-items: center; }
.find input { flex: 1; min-width: 0; padding-left: 3px; }
.find button { width: 22px; display: grid; place-items: center; }
.find svg { width: 12px; height: 8px; fill: none; stroke: #6d6f73; stroke-width: 3; }
.find button:nth-of-type(1) { width: 14px; }

.ribbon { flex: none; height: 93px; background: linear-gradient(#dde1e7 0, #cfd4dc 16px, #b6bdc9 17px, #d9e2ec 70px, #c7d2dd 100%); border: 1px solid #8f959c; border-bottom: 2px solid #8d9298; box-shadow: inset 0 1px #fff, inset 0 -2px #f2f8fa; border-radius: 5px; display: flex; gap: 3px; padding: 2px 3px; }
.group { flex: none; height: 87px; border: 1px solid #9a9fa6; border-radius: 3px; box-shadow: 1px 1px #eef1f5; position: relative; display: flex; flex-direction: column; background: linear-gradient(#dde0e6 0, #cfd3da 14px, #b9c0cb 15px, #e3ecf4 70px); }
.gbody { height: 70px; display: flex; overflow: hidden; }
.gfoot { height: 15px; background: linear-gradient(#b0b0b0, #828282); color: #fff; text-align: center; display: flex; align-items: center; border-radius: 0 0 2px 2px; }
.gfoot span { flex: 1; }
.gfoot svg { width: 8px; height: 8px; margin-right: 3px; }
.big { flex: none; display: flex; flex-direction: column; align-items: center; padding-top: 3px; }
.big svg { width: 32px; height: 32px; margin-bottom: 6px; }
.big span { display: flex; align-items: center; gap: 5px; height: 13px; }
.off { color: #9b9fa6; }
.off .drop { border-top-color: #a3abba; }
.sep { flex: none; width: 1px; margin: 4px 0 4px 3px; background: #9aa0a9; }
.stack { flex: none; display: flex; flex-direction: column; justify-content: center; }
.small { height: 22px; display: flex; align-items: center; gap: 4px; padding-left: 3px; }
.small .drop { margin-left: 4px; }
.group:nth-child(6) .stack { gap: 8px; }
.on { background: linear-gradient(#fbd9a6, #f9b45c 45%, #fcd58a); box-shadow: inset 0 0 0 1px #c99552; border-radius: 2px; }
.marker { position: absolute; left: -4px; top: -3px; width: 67px; height: 85px; border: 8px solid #ed1c24; z-index: 2; pointer-events: none; }

.work { flex: 1; min-height: 0; background: #e5e5e5; display: grid; grid-template-columns: 23px minmax(0, 1fr) 23px; gap: 2px; padding: 2px 0 1px; }
.side { background: linear-gradient(90deg, #686868, #8f8f8f); border: 1px solid #555; color: #fff; writing-mode: vertical-rl; padding-top: 9px; display: flex; align-items: center; justify-content: center; }
.side span { flex: 1; }
.side.left { border-radius: 0 5px 5px 0; border-left: 0; }
.side.right { border-radius: 5px 0 0 5px; border-right: 0; background: linear-gradient(90deg, #8f8f8f, #6e6e6e); }
.doc { display: flex; flex-direction: column; min-height: 0; }
.doctabs { height: 22px; flex: none; padding: 1px 0 0 2px; display: flex; }
.doctab { display: flex; align-items: center; justify-content: space-between; width: 224px; padding: 0 3px 0 7px; border: 1px solid #a0a0a0; border-bottom: 0; border-radius: 4px 4px 0 0; background: linear-gradient(#f7f7f7, #e3e3e3); }
.doctab button { width: 14px; height: 14px; border: 1px solid #999; border-radius: 2px; display: grid; place-items: center; background: #f2f2f2; }
.doctab svg { width: 8px; height: 8px; stroke: #333; stroke-width: 1.6; fill: none; }
.sheet { flex: 1; min-height: 0; border: 2px solid #a8a8a8; position: relative; background: #fff; overflow: hidden; }
table, thead, tbody { display: block; }
tr { display: grid; grid-template-columns: 102px 72px minmax(0, 1fr) 36px 54px 17px; }
th { font-weight: normal; height: 20px; line-height: 19px; padding: 0; text-align: center; background: linear-gradient(#fafafa, #e6e6e6); border: 1px solid #b4b4b4; border-width: 0 1px 1px 0; white-space: nowrap; color: #222; }
td { padding: 0; border: 1px solid #ccd5e3; border-width: 0 1px 1px 0; color: #000; }
td span { white-space: nowrap; }
tr.head { height: 21px; }
tr.line, tr.item { height: 31px; }
tr.sum { height: 48px; }
tr.item { font-weight: bold; }
.lp { display: flex; border-bottom: 0; }
.indent { flex: none; display: flex; align-items: center; justify-content: flex-end; padding-right: 2px; }
.filler { flex: none; width: 12px; border-bottom: 1px solid #ccd5e3; }
.indent button { width: 9px; height: 9px; border: 1px solid #7184ad; border-radius: 2px; background: linear-gradient(#4a5f92, #4a5f92) center / 5px 1px no-repeat, linear-gradient(#fff, #c9d4ea); }
.num { flex: 1; border: 1px solid #ccd5e3; border-width: 0 0 1px 1px; text-align: right; padding: 3px 1px 0 0; display: flex; flex-direction: column; }
.code { padding: 3px 0 0; display: flex; flex-direction: column; }
.desc { padding: 3px 3px 0 0; }
.desc div { display: flex; justify-content: space-between; }
.sum .desc { line-height: 14px; }
.unit, .price { display: flex; align-items: center; padding-top: 2px; }
.unit { justify-content: center; }
.price { justify-content: flex-end; padding-right: 1px; }
.scroll { position: absolute; right: 0; top: 20px; bottom: 0; width: 17px; background: #4a4a4a; border: 1px solid #37383c; display: flex; flex-direction: column; align-items: center; padding: 5px 0; }
.scroll i { border: 5px solid transparent; }
.scroll .up { border-top: 0; border-bottom-color: #e4e4e4; }
.scroll .down { border-bottom: 0; border-top-color: #e4e4e4; margin-top: auto; }
.thumb { margin-top: 17px; width: 15px; height: 16px; border: 1px solid #f6f6f6; background: repeating-linear-gradient(#55565a 0 1px, transparent 1px 3px) center / 9px 8px no-repeat, #dcdde2; }

.dock { flex: none; background: #e5e5e5; padding: 1px 1px 0; }
.bottom { height: 24px; background: linear-gradient(#717171, #929292); border-top: 1px solid #555; border-radius: 4px 4px 0 0; color: #fff; padding: 7px 0 0 10px; }
.status { flex: none; height: 22px; background: linear-gradient(#4b5059, #3a3d45 38%, #26282d 42%, #303238); display: flex; align-items: center; color: #fff; padding-left: 5px; }
.panels, .scope { height: 19px; background: #e6e8ee; border: 1px solid #8b8d92; color: #111; display: flex; align-items: center; }
.panels { width: 100px; }
.panels select, .scope select { flex: 1; min-width: 0; padding-left: 2px; }
.panels .drop { border-width: 4px 4px 0; margin-right: 9px; }
.panels svg { width: 8px; height: 8px; fill: none; stroke: #333; }
.panels button { margin-right: 4px; }
.link { margin: 0 8px 0 7px; display: flex; align-items: center; gap: 4px; }
.scope { width: 200px; margin-left: 3px; }
.scope .drop { margin-right: 3px; }
.zoom { display: flex; align-items: center; gap: 4px; margin-left: 6px; }
.info { margin-left: auto; width: 364px; height: 22px; border-left: 1px solid #222; background: linear-gradient(#aaaaaa, #6a6a6a 60%, #757575); display: flex; align-items: center; gap: 7px; padding-right: 7px; justify-content: flex-end; white-space: nowrap; }
</style>
